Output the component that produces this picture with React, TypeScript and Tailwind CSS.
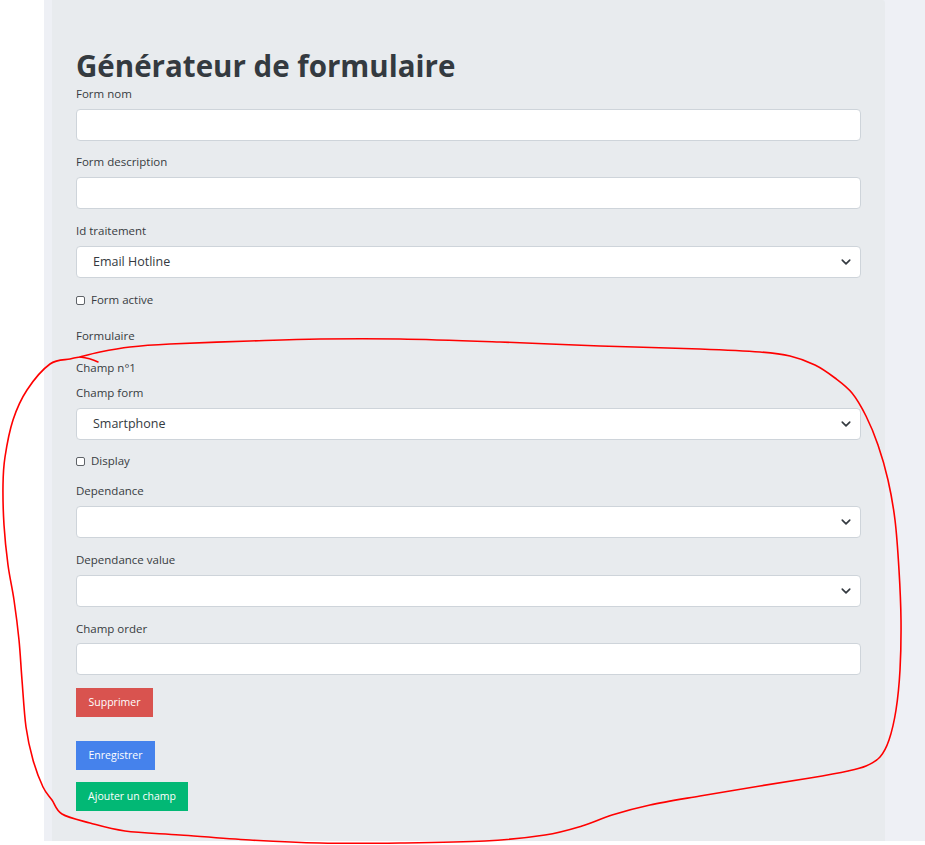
import React from "react";

const FONT = { fontFamily: '"Open Sans", "Noto Sans", sans-serif' };

function Label({ children, className = "" }: { children: React.ReactNode; className?: string }) {
  return <div className={`text-[11.5px] leading-[18px] text-[#373b41] ${className}`}>{children}</div>;
}

function TextBox({ className = "" }: { className?: string }) {
  return <div className={`h-[32px] w-full bg-white border border-[#ced4da] rounded-[4px] ${className}`} />;
}

function SelectBox({ value, className = "" }: { value?: string; className?: string }) {
  return (
    <div className={`h-[32px] w-full bg-white border border-[#ced4da] rounded-[4px] flex items-center justify-between pl-[16px] pr-[8px] ${className}`}>
      <span className="text-[12.5px] text-[#343a40]">{value ?? ""}</span>
      <svg width="12" height="10" viewBox="0 0 16 16" fill="none">
        <path d="M2 5l6 6 6-6" stroke="#343a40" strokeWidth="2.6" strokeLinecap="round" strokeLinejoin="round" />
      </svg>
    </div>
  );
}

function Check({ label, className = "" }: { label: string; className?: string }) {
  return (
    <div className={`flex items-center gap-[6px] h-[18px] ${className}`}>
      <span className="w-[9px] h-[9px] border border-[#5f6368] rounded-[2px] bg-white" />
      <span className="text-[11.5px] text-[#373b41]">{label}</span>
    </div>
  );
}

const loopPts: [number, number][] = [
  [80, 357], [100, 352], [130, 347], [170, 344], [250, 341], [320, 339], [400, 339], [500, 342],
  [600, 346], [700, 349], [760, 352], [790, 356], [815, 365], [835, 378], [852, 393], [866, 416],
  [878, 445], [888, 480], [895, 520], [899, 570], [901, 620], [900, 670], [896, 710], [889, 740],
  [880, 757], [866, 766], [848, 771], [810, 778], [760, 786], [700, 796], [650, 805], [612, 815],
  [582, 826], [545, 835], [485, 841], [400, 843], [320, 843], [250, 840], [180, 835], [125, 831],
  [90, 823], [62, 814], [52, 800], [43, 787], [33, 760], [26, 727], [22, 680], [19, 640], [14, 600],
  [8, 565], [4, 525], [3, 485], [5, 457], [13, 420], [27, 390], [50, 364], [70, 359], [80, 357],
];

function catmull(pts: [number, number][]) {
  let d = `M${pts[0][0]},${pts[0][1]}`;
  for (let i = 0; i < pts.length - 1; i++) {
    const p0 = pts[i - 1] || pts[i];
    const p1 = pts[i];
    const p2 = pts[i + 1];
    const p3 = pts[i + 2] || p2;
    const c1x = p1[0] + (p2[0] - p0[0]) / 6;
    const c1y = p1[1] + (p2[1] - p0[1]) / 6;
    const c2x = p2[0] - (p3[0] - p1[0]) / 6;
    const c2y = p2[1] - (p3[1] - p1[1]) / 6;
    d += ` C${c1x},${c1y} ${c2x},${c2y} ${p2[0]},${p2[1]}`;
  }
  return d;
}

export default function App() {
  return (
    <div className="relative w-[925px] h-[845px] bg-white overflow-hidden" style={FONT}>
      <div className="ml-[44px] h-[841px] bg-[#eef0f5] flex">
        <div className="ml-[8px] w-[833px] h-full bg-[#e8ebee] rounded-tr-[3px] px-[24px] pt-[48px]">
          <h1 className="text-[29.5px] leading-[36px] font-bold text-[#343a40]">Générateur de formulaire</h1>

          <Label className="mt-[1px] mb-[6px]">Form nom</Label>
          <TextBox className="mb-[12px]" />

          <Label className="mb-[6px]">Form description</Label>
          <TextBox className="mb-[13px]" />

          <Label className="mb-[6px]">Id traitement</Label>
          <SelectBox value="Email Hotline" />

          <Check label="Form active" className="mt-[13px]" />

          <Label className="mt-[18px]">Formulaire</Label>
          <Label className="mt-[14px]">Champ n°1</Label>

          <Label className="mt-[7px] mb-[6px]">Champ form</Label>
          <SelectBox value="Smartphone" />

          <Check label="Display" className="mt-[12px]" />

          <Label className="mt-[12px] mb-[6px]">Dependance</Label>
          <SelectBox className="mb-[13px]" />

          <Label className="mb-[6px]">Dependance value</Label>
          <SelectBox className="mb-[13px]" />

          <Label className="mb-[5px]">Champ order</Label>
          <TextBox />

          <div className="mt-[13px] flex flex-col items-start">
            <button className="h-[29px] w-[77px] bg-[#d9534f] text-white text-[10.5px]">Supprimer</button>
            <button className="mt-[24px] h-[29px] w-[79px] bg-[#4582ec] text-white text-[10.5px]">Enregistrer</button>
            <button className="mt-[12px] h-[29px] w-[112px] bg-[#02b875] text-white text-[10.5px]">Ajouter un champ</button>
          </div>
        </div>
      </div>

      <svg className="absolute left-0 top-0 pointer-events-none" width="925" height="845" viewBox="0 0 925 845" fill="none">
        <path d={catmull(loopPts)} stroke="#ff0000" strokeWidth="1.6" strokeLinecap="round" strokeLinejoin="round" />
        <path d="M80 357 Q90 358 98 362" stroke="#ff0000" strokeWidth="1.6" strokeLinecap="round" />
      </svg>
    </div>
  );
}
